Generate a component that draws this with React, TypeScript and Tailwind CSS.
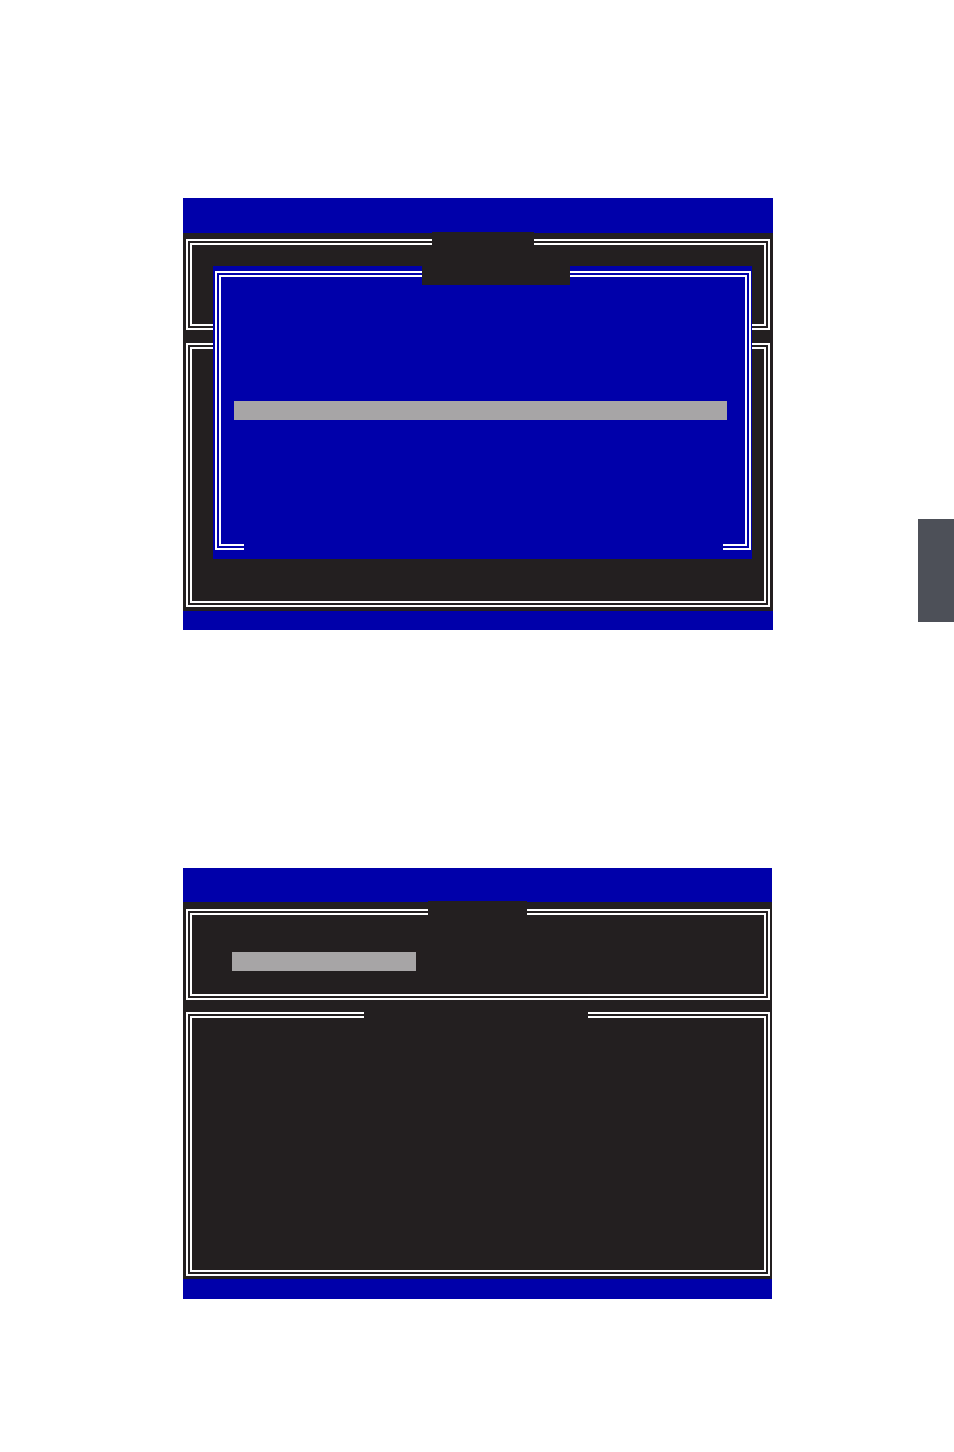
import React from "react";

// Double white rule box used by every setup panel.
// `notch` is a dark block drawn over the top rules where a title would sit.
const Frame = ({
  className = "",
  notch,
  children,
}: {
  className?: string;
  notch?: React.ReactNode;
  children?: React.ReactNode;
}) => {
  return (
    <div className={`relative border-2 border-white p-[2px] ${className}`}>
      <div className="h-full border-2 border-white">{children}</div>
      {notch}
    </div>
  );
};

const SetupScreenOne = () => {
  return (
    <div className="w-[590px] flex flex-col">
      <div className="h-[35px] bg-[#0000aa]" />
      <div className="relative h-[378px] bg-[#231f20] px-[3px] pt-[6px] pb-[4px] flex flex-col gap-[13px]">
        <Frame
          className="h-[91px]"
          notch={<span className="absolute left-[244px] top-[-9px] h-[14px] w-[102px] bg-[#231f20]" />}
        />
        <Frame className="h-[264px]" />

        {/* popup dialog on top of the panels */}
        <div className="absolute left-[30px] top-[33px] w-[539px] h-[293px] bg-[#0000aa] pt-[5px] pl-[2px] pr-[1px] pb-[9px]">
          <Frame className="h-full">
            <div className="pl-[13px] pt-[124px]">
              <div className="w-[493px] h-[19px] bg-[#a7a5a6]" />
            </div>
          </Frame>
          <span className="absolute left-[209px] top-[-1px] w-[148px] h-[20px] bg-[#231f20]" />
          <span className="absolute left-[31px] top-[277px] w-[479px] h-[8px] bg-[#0000aa]" />
        </div>
      </div>
      <div className="h-[19px] bg-[#0000aa]" />
    </div>
  );
};

const SetupScreenTwo = () => {
  return (
    <div className="w-[589px] flex flex-col">
      <div className="h-[34px] bg-[#0000aa]" />
      <div className="h-[377px] bg-[#231f20] pl-[3px] pr-[2px] pt-[7px] pb-[3px] flex flex-col gap-[12px]">
        <Frame
          className="h-[91px]"
          notch={<span className="absolute left-[240px] top-[-10px] h-[15px] w-[99px] bg-[#231f20]" />}
        >
          <div className="pl-[40px] pt-[37px]">
            <div className="w-[184px] h-[19px] bg-[#a7a5a6]" />
          </div>
        </Frame>
        <Frame
          className="h-[264px]"
          notch={<span className="absolute left-[176px] top-[-3px] h-[8px] w-[224px] bg-[#231f20]" />}
        />
      </div>
      <div className="h-[20px] bg-[#0000aa]" />
    </div>
  );
};

const App = () => {
  return (
    <div className="w-[954px] h-[1452px] bg-white pt-[198px]">
      <div className="flex">
        <div className="pl-[183px]">
          <SetupScreenOne />
        </div>
        <div className="flex-1" />
        {/* chapter thumb tab */}
        <div className="mt-[321px] w-[36px] h-[103px] bg-[#4d5058]" />
      </div>
      <div className="pl-[183px] mt-[238px]">
        <SetupScreenTwo />
      </div>
    </div>
  );
};

export default App;
